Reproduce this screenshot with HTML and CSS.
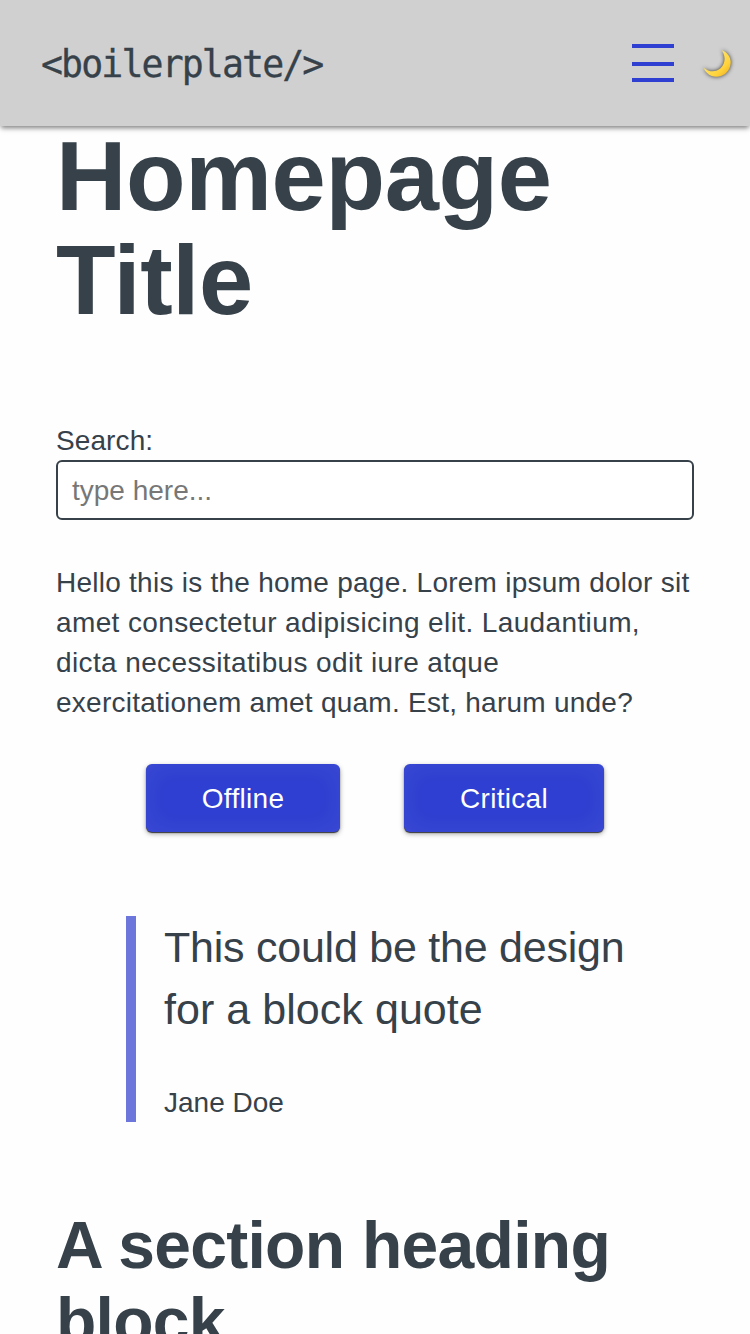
FILE: index.html
```html
<!DOCTYPE html>
<html lang="en">
<head>
<meta charset="utf-8">
<meta name="viewport" content="width=device-width, initial-scale=1">
<title>Homepage Title</title>
<link rel="stylesheet" href="styles.css">
</head>
<body>
<header class="header">
  <a class="logo">&lt;boilerplate/&gt;</a>
  <button class="menu" aria-label="Menu"><span class="bar bar-top"></span><span class="bar bar-mid"></span><span class="bar"></span></button>
  <button class="theme" aria-label="Dark mode">
    <svg class="moon" viewBox="0 0 34 34">
      <defs><linearGradient id="moonfill" x1="0" y1="0" x2="1" y2="1"><stop offset=".4" stop-color="#ffe05f"/><stop offset=".7" stop-color="#ffd23a"/><stop offset="1" stop-color="#e9a91d"/></linearGradient></defs>
      <path d="M20.8 3.2C28 6 31 12.2 29.2 19C26.9 27.5 18.5 31.6 10.7 28.9C7.1 27.6 4.2 24.7 2.5 20.7C8.1 25.5 15.1 25.3 19.5 21.3C24.2 17 25.1 9.5 20.8 3.2Z" fill="url(#moonfill)"/>
    </svg>
  </button>
</header>
<main class="page">
  <h1 class="title">Homepage Title</h1>
  <label class="label" for="search">Search:</label>
  <input class="search" id="search" type="text" placeholder="type here...">
  <p class="intro">Hello this is the home page. Lorem ipsum dolor sit <span class="intro-wide">amet consectetur adipisicing elit. Laudantium, dicta necessitatibus odit iure atque</span><br>exercitationem amet quam. Est, harum unde?</p>
  <div class="actions">
    <button class="button button-offline">Offline</button>
    <button class="button button-critical">Critical</button>
  </div>
  <blockquote class="quote">
    <p class="quote-text">This could be the design <span class="quote-wide">for a block quote</span></p>
    <footer class="quote-author">Jane Doe</footer>
  </blockquote>
  <h2 class="section-title">A section heading block</h2>
</main>
</body>
</html>
```
FILE: styles.css
```css
* { box-sizing: border-box; }
body {
  margin: 0;
  background: #fefefe;
  color: #36414a;
  font: 28px/40px "Liberation Sans", Arial, sans-serif;
}
html { scrollbar-width: none; }
h1, h2, p, blockquote { margin: 0; }
button { border: 0; padding: 0; background: none; font: inherit; }
.header {
  display: flex;
  align-items: center;
  height: 126px;
  padding: 0 15px 0 41px;
  background: #d0d0d0;
  box-shadow: 0 3px 5px -1px rgba(0, 0, 0, .5);
}
.logo {
  flex: 1;
  font: 36.5px/50px "DejaVu Sans Mono", monospace;
  letter-spacing: -1.87px;
  padding-top: 4px;
  -webkit-text-stroke: .3px currentColor;
}
.menu { display: flex; flex-direction: column; width: 42px; }
.bar { height: 4px; background: #2e3fd1; }
.bar-top { margin-bottom: 14px; }
.bar-mid { margin-bottom: 12px; }
.theme { width: 34px; height: 34px; margin: 2px 0 0 27px; }
.moon { display: block; width: 34px; height: 34px; overflow: visible; filter: drop-shadow(0 0 2px rgba(0, 0, 0, .75)); }
.page { padding: 0 56px; }
.title {
  margin-top: -1px;
  font-size: 97.5px;
  line-height: 104px;
  letter-spacing: -.35px;
  height: 296px;
}
.label { display: block; height: 39px; letter-spacing: .1px; }
.search {
  display: block;
  width: 638px;
  height: 60px;
  padding: 2px 14px 0;
  border: 2px solid #36414a;
  border-radius: 6px;
  background: #fff;
  color: inherit;
  font: inherit;
}
.search::placeholder { color: #777; opacity: 1; }
.intro { margin-top: 43px; letter-spacing: .25px; }
.intro-wide { letter-spacing: .38px; }
.actions { display: flex; justify-content: center; gap: 64px; margin-top: 41px; }
.button {
  height: 68px;
  padding-top: 2px;
  border-radius: 6px;
  background: #2e3fd1;
  box-shadow: 0 1px 1px rgba(0, 0, 0, .7), 0 2px 5px rgba(0, 0, 0, .35), inset 0 0 28px rgba(255, 255, 255, .07);
  color: #fff;
  letter-spacing: .3px;
}
.button-offline { width: 194px; }
.button-critical { width: 200px; }
.quote {
  height: 206px;
  margin: 84px 70px 0;
  padding-left: 28px;
  border-left: 10px solid #6d76da;
}
.quote-text { margin-right: -10px; font-size: 43px; line-height: 62px; letter-spacing: -.24px; }
.quote-wide { letter-spacing: .05px; }
.quote-author { margin-top: 43px; }
.section-title { margin-top: 85px; font-size: 66px; line-height: 76px; letter-spacing: -.7px; }
```
